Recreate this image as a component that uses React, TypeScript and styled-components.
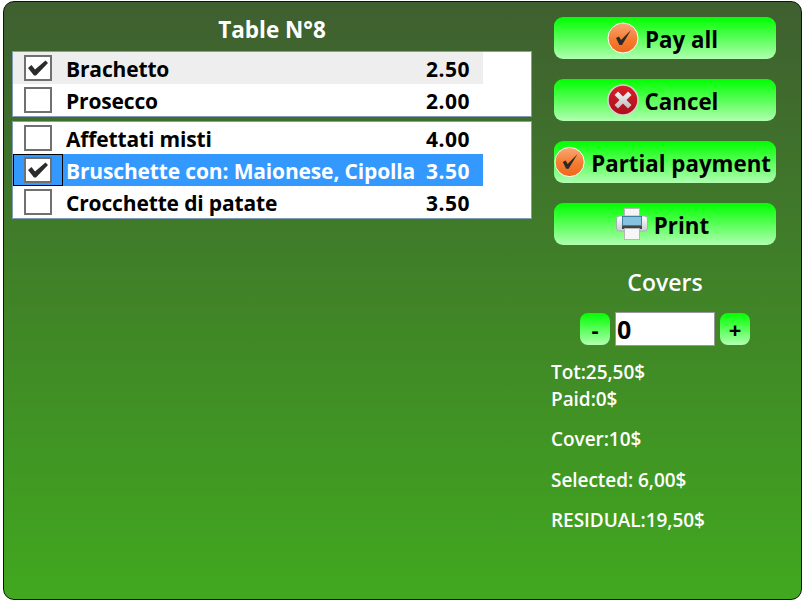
import React from 'react';
import styled, { createGlobalStyle } from 'styled-components';

const Global = createGlobalStyle`
  html, body {
    margin: 0;
    background: #fff;
    font-family: "Open Sans", "Noto Sans", "Liberation Sans", sans-serif;
  }
`;

const Panel = styled.div`
  box-sizing: border-box;
  width: 799px;
  height: 599px;
  margin: 1px 0 0 3px;
  display: flex;
  border: 1.5px solid #111;
  border-radius: 11px;
  background: linear-gradient(to bottom, #3f5f30 0%, #41a81f 100%);
`;

const LeftColumn = styled.div`
  box-sizing: border-box;
  width: 530px;
  padding: 13px 0 0 8px;
`;

const Title = styled.div`
  height: 36px;
  padding-right: 2px;
  line-height: 30px;
  text-align: center;
  color: #fff;
  font-size: 22.5px;
  font-weight: 700;
  white-space: nowrap;
`;

const List = styled.div`
  box-sizing: border-box;
  width: 520px;
  background: #fff;
  border: 1px solid #7f9db9;
  margin-bottom: 4px;
`;

const Row = styled.div<{ $state?: 'hover' | 'selected' }>`
  width: 470px;
  height: 32px;
  display: flex;
  align-items: center;
  background: ${p => (p.$state === 'selected' ? '#3399ff' : p.$state === 'hover' ? '#eeeeee' : 'transparent')};
  color: ${p => (p.$state === 'selected' ? '#fff' : '#000')};
  font-size: 21px;
  font-weight: 700;
`;

const CheckCell = styled.div<{ $focused?: boolean }>`
  box-sizing: border-box;
  width: 50px;
  height: 32px;
  flex: none;
  display: flex;
  align-items: center;
  justify-content: center;
  margin-right: 3px;
  border: 1px solid ${p => (p.$focused ? '#000' : 'transparent')};
`;

const CheckBox = styled.div`
  box-sizing: border-box;
  width: 28px;
  height: 26px;
  background: #fff;
  border: 2px solid #707070;
  display: flex;
  align-items: center;
  justify-content: center;
`;

const ItemName = styled.span`
  flex: 1;
  margin-top: 2px;
  white-space: nowrap;
  letter-spacing: -0.15px;
`;

const ItemPrice = styled.span`
  width: 57px;
  flex: none;
  margin-top: 2px;
  letter-spacing: 0.5px;
`;

const RightColumn = styled.div`
  box-sizing: border-box;
  flex: 1;
  padding: 14.5px 0 0 20px;
  display: flex;
  flex-direction: column;
`;

const ActionButton = styled.div`
  box-sizing: border-box;
  width: 222px;
  height: 42px;
  margin-bottom: 20px;
  padding-right: 5px;
  display: flex;
  align-items: center;
  justify-content: center;
  gap: 6px;
  border-radius: 9px;
  background: linear-gradient(to bottom, #00ff00 0%, #b0ffb0 100%);
  color: #000;
  font-size: 22.3px;
  font-weight: 700;
  white-space: nowrap;
`;

const ButtonLabel = styled.span`
  margin-top: 4px;
`;

const CoversTitle = styled.div`
  width: 222px;
  text-align: center;
  color: #fff;
  font-size: 23px;
  font-weight: 600;
  line-height: 30px;
  margin: 2px 0 15px;
`;

const Stepper = styled.div`
  width: 222px;
  display: flex;
  align-items: center;
  justify-content: center;
  gap: 5px;
  margin-bottom: 13px;
`;

const StepButton = styled.div`
  width: 30px;
  height: 32px;
  border-radius: 8px;
  background: linear-gradient(to bottom, #00ff00 0%, #b0ffb0 100%);
  display: flex;
  align-items: center;
  justify-content: center;
  font-size: 22px;
  font-weight: 700;
  color: #000;
`;

const CoverInput = styled.div`
  box-sizing: border-box;
  width: 100px;
  height: 34px;
  padding-left: 1px;
  background: #fff;
  border: 1px solid #999;
  color: #000;
  font-size: 25px;
  font-weight: 700;
  line-height: 33px;
`;

const Info = styled.div<{ $gap?: number }>`
  margin-left: -3px;
  margin-top: ${p => p.$gap ?? 0}px;
  color: #fff;
  font-size: 19px;
  font-weight: 600;
  line-height: 27px;
  letter-spacing: -0.05px;
  white-space: nowrap;
`;

const Tick = () => (
  <svg width="22" height="16" viewBox="0 0 22 16">
    <path d="M1 8 L4.5 5 L8 9.5 L18.5 0.5 L21 3 L9 15.5 L7 15.5 Z" fill="#2b2b2b" />
  </svg>
);

const OrangeCheck = () => (
  <svg width="32" height="32" viewBox="0 0 32 32">
    <defs>
      <linearGradient id="orangeBall" x1="0" y1="0" x2="0" y2="1">
        <stop offset="0" stopColor="#f9a878" />
        <stop offset="0.5" stopColor="#f57f35" />
        <stop offset="1" stopColor="#f0661a" />
      </linearGradient>
    </defs>
    <circle cx="16" cy="16" r="15" fill="url(#orangeBall)" stroke="#fff" strokeWidth="1" />
    <path d="M9 16 L12 14.5 L14 18 L24 8 L15 23 L12.5 23 Z" fill="#2a2a2a" />
  </svg>
);

const CancelIcon = () => (
  <svg width="32" height="32" viewBox="0 0 32 32">
    <defs>
      <linearGradient id="redBall" x1="0" y1="0" x2="0" y2="1">
        <stop offset="0" stopColor="#d8202c" />
        <stop offset="1" stopColor="#a90f18" />
      </linearGradient>
      <linearGradient id="greyCross" x1="0" y1="0" x2="0" y2="1">
        <stop offset="0" stopColor="#f4f4f4" />
        <stop offset="1" stopColor="#bdbdbd" />
      </linearGradient>
    </defs>
    <circle cx="16" cy="16" r="15" fill="url(#redBall)" stroke="#d9d0d0" strokeWidth="1.5" />
    <path
      d="M11 7.5 L16 12.5 L21 7.5 L24.5 11 L19.5 16 L24.5 21 L21 24.5 L16 19.5 L11 24.5 L7.5 21 L12.5 16 L7.5 11 Z"
      fill="url(#greyCross)"
    />
  </svg>
);

const PrinterIcon = () => (
  <svg width="32" height="32" viewBox="0 0 32 32">
    <defs>
      <linearGradient id="printerBody" x1="0" y1="0" x2="0" y2="1">
        <stop offset="0" stopColor="#ffffff" />
        <stop offset="1" stopColor="#c9ced2" />
      </linearGradient>
    </defs>
    <rect x="8.5" y="0.5" width="15" height="9" fill="#f4f4f4" stroke="#b8b8b8" />
    <rect x="0.5" y="8" width="31" height="15" rx="3" fill="url(#printerBody)" stroke="#a8b0b6" />
    <rect x="6.5" y="8.5" width="19" height="9" fill="#86c3de" stroke="#3f7f9f" />
    <rect x="6" y="18" width="20" height="3" fill="#444" />
    <rect x="8.5" y="20.5" width="15" height="11" fill="#f6f6f6" stroke="#b8b8b8" />
  </svg>
);

export default function App() {
  return (
    <>
      <Global />
      <Panel>
        <LeftColumn>
          <Title>Table N°8</Title>
          <List>
            <Row $state="hover">
              <CheckCell><CheckBox><Tick /></CheckBox></CheckCell>
              <ItemName>Brachetto</ItemName>
              <ItemPrice>2.50</ItemPrice>
            </Row>
            <Row>
              <CheckCell><CheckBox /></CheckCell>
              <ItemName>Prosecco</ItemName>
              <ItemPrice>2.00</ItemPrice>
            </Row>
          </List>
          <List>
            <Row>
              <CheckCell><CheckBox /></CheckCell>
              <ItemName>Affettati misti</ItemName>
              <ItemPrice>4.00</ItemPrice>
            </Row>
            <Row $state="selected">
              <CheckCell $focused><CheckBox><Tick /></CheckBox></CheckCell>
              <ItemName>Bruschette con: Maionese, Cipolla</ItemName>
              <ItemPrice>3.50</ItemPrice>
            </Row>
            <Row>
              <CheckCell><CheckBox /></CheckCell>
              <ItemName>Crocchette di patate</ItemName>
              <ItemPrice>3.50</ItemPrice>
            </Row>
          </List>
        </LeftColumn>
        <RightColumn>
          <ActionButton><OrangeCheck /><ButtonLabel>Pay all</ButtonLabel></ActionButton>
          <ActionButton><CancelIcon /><ButtonLabel>Cancel</ButtonLabel></ActionButton>
          <ActionButton><OrangeCheck /><ButtonLabel>Partial payment</ButtonLabel></ActionButton>
          <ActionButton><PrinterIcon /><ButtonLabel>Print</ButtonLabel></ActionButton>
          <CoversTitle>Covers</CoversTitle>
          <Stepper>
            <StepButton>-</StepButton>
            <CoverInput>0</CoverInput>
            <StepButton>+</StepButton>
          </Stepper>
          <Info>Tot:25,50$</Info>
          <Info>Paid:0$</Info>
          <Info $gap={13}>Cover:10$</Info>
          <Info $gap={14}>Selected: 6,00$</Info>
          <Info $gap={13}>RESIDUAL:19,50$</Info>
        </RightColumn>
      </Panel>
    </>
  );
}
